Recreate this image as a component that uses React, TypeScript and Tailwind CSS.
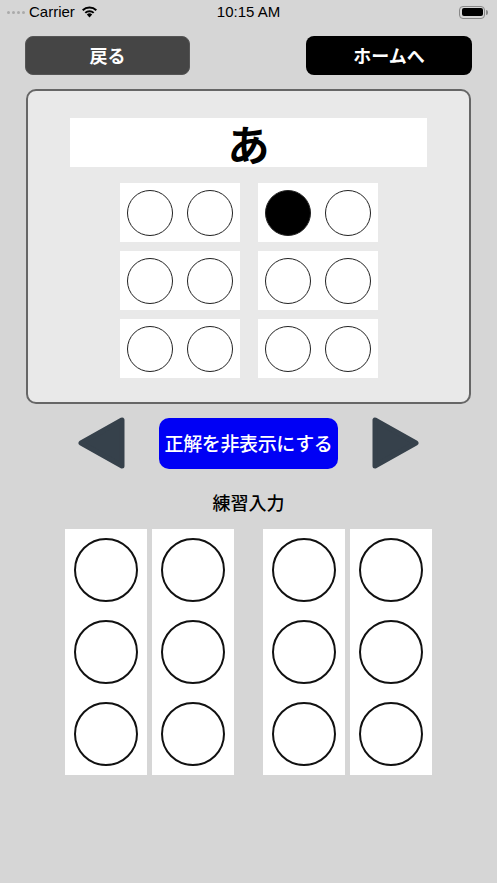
import React from 'react';

const jp = { fontFamily: '"Noto Sans CJK JP", "Noto Sans", sans-serif' };

const Dot: React.FC<{ on?: boolean; big?: boolean }> = ({ on, big }) =>
  big ? (
    <div className="w-[82px] h-[82px] bg-white flex items-center justify-center">
      <div className="w-[64px] h-[64px] rounded-full border-2 border-[#111]" />
    </div>
  ) : (
    <div className="w-[60px] h-[59px] bg-white flex items-center justify-center">
      <div className={`w-[46px] h-[46px] rounded-full border border-[#222] ${on ? 'bg-black' : 'bg-white'}`} />
    </div>
  );

const Arrow: React.FC<{ dir: 'left' | 'right' }> = ({ dir }) => (
  <svg width="47" height="52" viewBox="0 0 47 52">
    <path
      d={dir === 'left' ? 'M44 3 L44 49 L3 26 Z' : 'M3 3 L3 49 L44 26 Z'}
      fill="#36414b"
      stroke="#36414b"
      strokeWidth="5"
      strokeLinejoin="round"
    />
  </svg>
);

const App: React.FC = () => {
  // braille for あ: dot 1 only
  const answer = [
    [false, false, true, false],
    [false, false, false, false],
    [false, false, false, false],
  ];

  return (
    <div className="w-[497px] h-[883px] bg-[#d6d6d6] flex flex-col overflow-hidden">
      {/* status bar */}
      <div className="h-[24px] grid grid-cols-3 items-center px-[7px] text-[15px] text-black" style={{ fontFamily: '"Liberation Sans", Arial, sans-serif' }}>
        <div className="flex items-center">
          <div className="flex gap-[2px] mr-[4px]">
            {[0, 1, 2, 3].map(i => (
              <div key={i} className="w-[3px] h-[3px] rounded-full bg-[#aaa]" />
            ))}
          </div>
          <span>Carrier</span>
          <svg width="17" height="12" viewBox="0 0 17 12" className="ml-[6px]">
            <path d="M8.5 11.5 L5.8 8.5 A4 4 0 0 1 11.2 8.5 Z" fill="black" />
            <path d="M3.6 6.2 A7 7 0 0 1 13.4 6.2 L12 7.6 A5 5 0 0 0 5 7.6 Z" fill="black" />
            <path d="M1 3.6 A10.8 10.8 0 0 1 16 3.6 L14.6 5 A8.8 8.8 0 0 0 2.4 5 Z" fill="black" />
          </svg>
        </div>
        <div className="text-center">10:15 AM</div>
        <div className="flex justify-end items-center pr-[2px]">
          <div className="w-[26px] h-[13px] rounded-[4px] border border-[#888] p-[1.5px]">
            <div className="w-full h-full rounded-[2px] bg-black" />
          </div>
          <div className="w-[2px] h-[5px] bg-[#888] rounded-r-sm ml-[1px]" />
        </div>
      </div>

      {/* top buttons */}
      <div className="mt-[12px] px-[25px] flex justify-between" style={jp}>
        <button className="w-[165px] h-[39px] rounded-[8px] bg-[#454545] border border-[#555] text-white text-[18px] font-bold">戻る</button>
        <button className="w-[166px] h-[39px] rounded-[8px] bg-black text-white text-[18px] font-bold">ホームへ</button>
      </div>

      {/* answer card */}
      <div className="mt-[14px] mx-[26px] h-[315px] border-2 border-[#666] rounded-[10px] bg-[#e9e9e9] flex flex-col items-center pt-[27px]">
        <div className="w-[357px] h-[49px] bg-white flex items-center justify-center text-[42px] font-bold text-black leading-none" style={jp}>
          あ
        </div>
        <div className="mt-[16px] flex flex-col gap-[9px]">
          {answer.map((row, r) => (
            <div key={r} className="flex gap-[18px]">
              <div className="flex">
                <Dot on={row[0]} />
                <Dot on={row[1]} />
              </div>
              <div className="flex">
                <Dot on={row[2]} />
                <Dot on={row[3]} />
              </div>
            </div>
          ))}
        </div>
      </div>

      {/* controls */}
      <div className="mt-[13px] flex justify-center items-center gap-[34px]">
        <Arrow dir="left" />
        <button className="w-[179px] h-[51px] rounded-[10px] bg-[#0000f5] text-white text-[19px] font-medium whitespace-nowrap tracking-[-0.02em]" style={jp}>
          正解を非表示にする
        </button>
        <Arrow dir="right" />
      </div>

      <div className="mt-[20px] text-center text-[18px] font-medium text-black" style={jp}>
        練習入力
      </div>

      {/* practice input */}
      <div className="mt-[13px] flex justify-center gap-[29px]">
        {[0, 1].map(g => (
          <div key={g} className="flex gap-[5px]">
            {[0, 1].map(c => (
              <div key={c} className="flex flex-col">
                <Dot big />
                <Dot big />
                <Dot big />
              </div>
            ))}
          </div>
        ))}
      </div>
    </div>
  );
};

export default App;
